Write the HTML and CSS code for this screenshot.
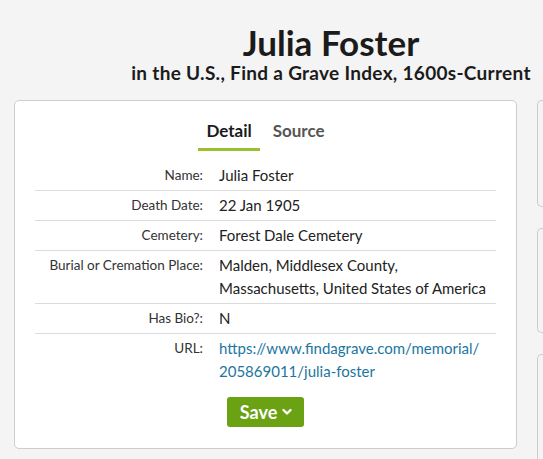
FILE: index.html
```html
<!DOCTYPE html>
<html lang="en">
<head>
  <meta charset="UTF-8">
  <meta name="viewport" content="width=device-width, initial-scale=1.0">
  <title>Julia Foster - Find a Grave Index</title>

  <link rel="stylesheet" href="styles.css">
</head>
<body>

  <div class="page">
    <header class="record-head">
      <h1 class="record-name">Julia Foster</h1>
      <p class="record-collection">in the U.S., Find a Grave Index, 1600s-Current</p>
    </header>

    <div class="columns">
      <section class="card record">
        <nav class="tabs">
          <a class="tab tab-active">Detail</a>
          <a class="tab">Source</a>
        </nav>

        <table class="facts">
          <tr>
            <th>Name:</th>
            <td>Julia Foster</td>
          </tr>
          <tr>
            <th>Death Date:</th>
            <td>22 Jan 1905</td>
          </tr>
          <tr>
            <th>Cemetery:</th>
            <td>Forest Dale Cemetery</td>
          </tr>
          <tr>
            <th>Burial or Cremation Place:</th>
            <td>Malden, Middlesex County, Massachusetts, United States of America</td>
          </tr>
          <tr>
            <th>Has Bio?:</th>
            <td>N</td>
          </tr>
          <tr>
            <th>URL:</th>
            <td><a class="link" href="#">https://www.findagrave.com/memorial/ 205869011/julia-foster</a></td>
          </tr>
        </table>

        <div class="actions">
          <button class="btn-save">
            Save
            <svg class="chevron" width="10" height="8" viewBox="0 0 10 8">
              <path d="M1.5 2 L5 5.5 L8.5 2" fill="none" stroke="#fff" stroke-width="2.4" stroke-linecap="round" stroke-linejoin="round"/>
            </svg>
          </button>
        </div>
      </section>

      <!-- next column only peeks in at the right edge -->
      <aside class="side">
        <div class="card side-card side-card-1"></div>
        <div class="card side-card side-card-2"></div>
        <div class="card side-card side-card-3"></div>
      </aside>
    </div>
  </div>

</body>
</html>
```

FILE: styles.css
```css
* {
  margin: 0;
  padding: 0;

  box-sizing: border-box;
  font-family: 'Lato', sans-serif;
}

body {
  background: #f4f4f4;
  color: #222;
  overflow: hidden;
}

.page {
  margin-left: 14px;
  padding-top: 22px;
}

/* Header */

.record-head {
  padding-left: 105px;
  text-align: center;
  color: #1b1b1b;
}

.record-name {
  font-size: 35px;
  line-height: 40px;
  font-weight: 700;
}

.record-collection {
  font-size: 19px;
  line-height: 22px;
  font-weight: 700;
  letter-spacing: 0.3px;
}

.columns {
  display: flex;
  align-items: flex-start;
  gap: 20px;
  margin-top: 16px;
}

.card {
  border: 1px solid #cdcdcd;
  border-radius: 5px;
}

/* Main record card */

.record {
  flex: none;
  width: 503px;
  padding: 18px 20px 21px 20px;
  background: #fff;
}

.tabs {
  display: flex;
  justify-content: center;
  gap: 5px;
  margin-bottom: 10px;
}

.tab {
  padding: 0 8px 6px;

  color: #555;
  font-size: 17px;
  line-height: 23px;
  font-weight: 700;

  border-bottom: 3px solid transparent;
  cursor: pointer;
}

.tab-active {
  color: #1b1b1b;
  border-bottom-color: #9bbf2f;
}

.facts {
  width: 100%;
  border-collapse: collapse;
}

.facts tr + tr {
  border-top: 1px solid #dcdcdc;
}

.facts th,
.facts td {
  padding: 3px 0;
  line-height: 23px;
  vertical-align: top;
}

.facts th {
  width: 184px;
  padding-right: 16px;

  color: #333;
  font-size: 13.5px;
  font-weight: 400;
  text-align: right;
  white-space: nowrap;
}

.facts td {
  font-size: 15px;
}

.link {
  color: #1b76a0;
  text-decoration: none;
}

.actions {
  display: flex;
  justify-content: center;
  margin-top: 11px;
}

.btn-save {
  display: flex;
  align-items: center;
  gap: 5px;

  height: 30px;
  padding: 0 12px 0 13px;

  color: #fff;
  background: #6aa214;
  border: none;
  border-radius: 3px;

  font-size: 18px;
  font-weight: 700;
  cursor: pointer;
}

/* Right column */

.side {
  flex: 1;
  display: flex;
  flex-direction: column;
  gap: 21px;
  min-width: 0;
}

.side-card {
  border-right: none;
  border-radius: 5px 0 0 5px;
}

.side-card-1 {
  height: 107px;
}

.side-card-2 {
  height: 105px;
}

.side-card-3 {
  height: 120px;
}
```
